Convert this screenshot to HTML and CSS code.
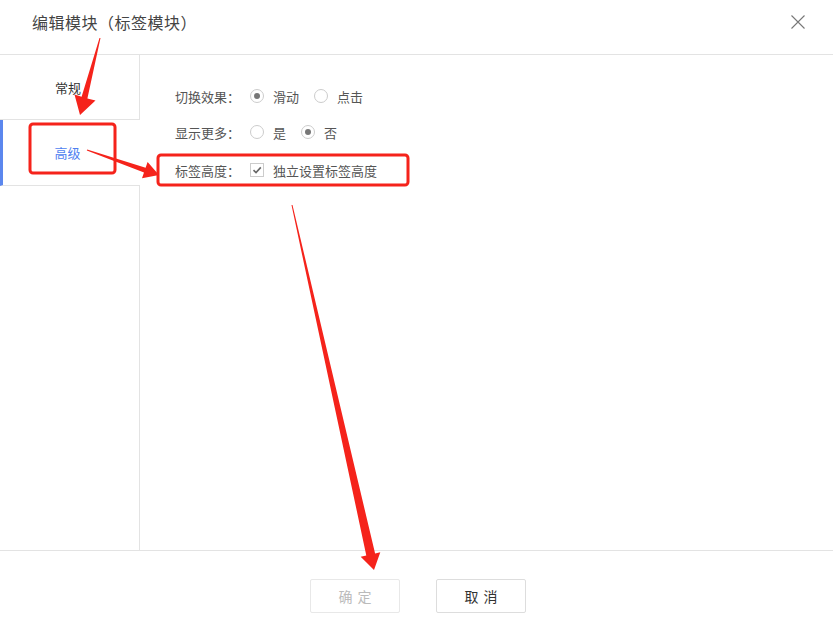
FILE: index.html
```html
<!DOCTYPE html>
<html lang="zh-CN">
<head>
<meta charset="utf-8">
<title>编辑模块</title>
<link rel="stylesheet" href="styles.css">
</head>
<body>
<div class="dialog">
  <div class="header">
    <div class="title">编辑模块（标签模块）</div>
    <svg class="close" width="14" height="14" viewBox="0 0 14 14"><path d="M0.5 0.5 L13.5 13.5 M13.5 0.5 L0.5 13.5" stroke="#777" stroke-width="1.1" fill="none"/></svg>
  </div>
  <div class="body">
    <div class="sidebar">
      <div class="tab tab-first">常规</div>
      <div class="tab tab-active">高级</div>
      <div class="tab-fill"></div>
    </div>
    <div class="content">
      <div class="row">
        <span class="label">切换效果：</span>
        <span class="radio checked"></span><span class="opt">滑动</span>
        <span class="radio"></span><span class="opt">点击</span>
      </div>
      <div class="row">
        <span class="label">显示更多：</span>
        <span class="radio"></span><span class="opt">是</span>
        <span class="radio checked"></span><span class="opt">否</span>
      </div>
      <div class="row row-third">
        <span class="label">标签高度：</span>
        <span class="checkbox"><svg width="12" height="12" viewBox="0 0 12 12"><path d="M2.5 6.2 L5 8.6 L9.8 3.4" stroke="#666" stroke-width="1.6" fill="none"/></svg></span><span class="opt">独立设置标签高度</span>
      </div>
    </div>
  </div>
  <div class="footer">
    <button class="btn btn-disabled">确 定</button>
    <button class="btn">取 消</button>
  </div>
  <svg class="annot" width="833" height="629" viewBox="0 0 833 629">
    <rect x="30" y="124" width="85" height="49" rx="3" ry="3" fill="none" stroke="#f5231b" stroke-width="3"/>
    <rect x="158" y="155" width="250" height="30" rx="3" ry="3" fill="none" stroke="#f5231b" stroke-width="3"/>
    <polygon fill="#f5231b" points="100.5,38.1 87.4,98.4 95.5,100.6 80,115 74.5,94.6 81.6,96.8 99.5,37.9"/>
    <polygon fill="#f5231b" points="86.8,150.5 144.0,172.5 142.0,178.2 159,175 147.6,162.0 145.6,167.7 87.2,149.5"/>
    <polygon fill="#f5231b" points="292.5,204.9 375.1,553.5 380.3,552.3 374,570 360.7,556.7 366.3,555.4 291.5,205.1"/>
  </svg>
</div>
</body>
</html>
```
FILE: styles.css
```css
* { box-sizing: border-box; }
html, body { margin: 0; padding: 0; background: #fff; }
body {
  font-family: "Microsoft YaHei", "Noto Sans CJK SC", "Noto Sans", sans-serif;
  font-size: 13px;
  color: #555;
}
.dialog {
  position: relative;
  width: 833px;
  height: 629px;
  display: flex;
  flex-direction: column;
  overflow: hidden;
}
.header {
  height: 55px;
  border-bottom: 1px solid #e3e3e3;
  display: flex;
  align-items: flex-start;
  justify-content: space-between;
  padding: 11px 28px 0 32px;
  flex: none;
}
.title {
  font-size: 16px;
  line-height: 22px;
  letter-spacing: 0.5px;
  color: #444;
}
.close { margin-top: 4px; }
.body {
  height: 496px;
  display: flex;
  flex: none;
  border-bottom: 1px solid #e3e3e3;
}
.sidebar {
  width: 140px;
  display: flex;
  flex-direction: column;
}
.tab {
  display: flex;
  align-items: center;
  justify-content: center;
  border-bottom: 1px solid #e3e3e3;
  color: #333;
}
.tab-first {
  height: 65px;
  border-right: 1px solid #e3e3e3;
  padding-right: 3px;
}
.tab-active {
  height: 66px;
  border-left: 3px solid #5b87ee;
  color: #4f7ff0;
  padding-right: 8px;
}
.tab-fill {
  flex: 1;
  border-right: 1px solid #e3e3e3;
}
.content {
  flex: 1;
  padding: 23px 0 0 35px;
}
.row {
  height: 36px;
  display: flex;
  align-items: center;
}
.row-third { margin-top: 2px; }
.label {
  width: 75px;
  color: #555;
}
.radio {
  width: 14px;
  height: 14px;
  border: 1px solid #ccc;
  border-radius: 50%;
  display: flex;
  align-items: center;
  justify-content: center;
  margin-right: 9px;
}
.radio.checked::after {
  content: "";
  width: 6px;
  height: 6px;
  border-radius: 50%;
  background: #777;
}
.opt {
  margin-right: 15px;
  color: #555;
}
.checkbox {
  width: 14px;
  height: 14px;
  border: 1px solid #ccc;
  display: flex;
  align-items: center;
  justify-content: center;
  margin-right: 9px;
}
.footer {
  flex: 1;
  display: flex;
  justify-content: center;
  align-items: flex-start;
  gap: 36px;
  padding-top: 28px;
  padding-left: 3px;
}
.btn {
  width: 90px;
  height: 34px;
  border: 1px solid #ddd;
  border-radius: 2px;
  background: #fff;
  font-family: inherit;
  font-size: 14px;
  letter-spacing: 1px;
  color: #333;
  padding: 0 0 0 1px;
}
.btn-disabled {
  color: #bbb;
  border-color: #e8e8e8;
}
.annot {
  position: absolute;
  left: 0;
  top: 0;
  pointer-events: none;
}
```
